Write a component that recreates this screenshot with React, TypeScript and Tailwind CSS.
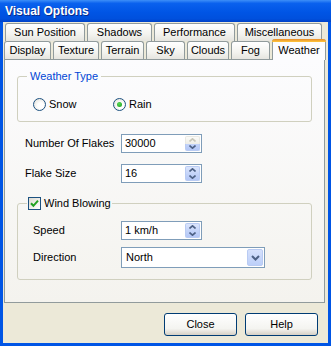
import React from 'react';

const font = { fontFamily: '"Liberation Sans", Arial, sans-serif' };

function Tab({ label, w, selected = false }: { label: string; w: number; selected?: boolean }) {
  if (selected) {
    return (
      <div
        className="relative z-10 -mt-[2px] h-[21px] shrink-0 rounded-t-[3px] border-x border-[#919b9c] bg-[#fcfcfe] text-center text-[11px] leading-[16px] text-black"
        style={{ width: w }}
      >
        <div className="h-[3px] rounded-t-[3px] bg-[linear-gradient(180deg,#e68b2c,#ffc73c)] -mx-[1px]" />
        {label}
      </div>
    );
  }
  return (
    <div
      className="h-[18px] shrink-0 rounded-t-[3px] border-x border-t border-[#919b9c] bg-[linear-gradient(180deg,#ffffff,#f3f3ef_60%,#e6e5df)] text-center text-[11px] leading-[17px] text-black"
      style={{ width: w }}
    >
      {label}
    </div>
  );
}

function Arrow({ dir, color }: { dir: 'up' | 'down'; color: string }) {
  return (
    <svg width="7" height="4" viewBox="0 0 7 4">
      {dir === 'up' ? (
        <path d="M0.5 3.5 L3.5 0.8 L6.5 3.5" fill="none" stroke={color} strokeWidth="1.6" />
      ) : (
        <path d="M0.5 0.5 L3.5 3.2 L6.5 0.5" fill="none" stroke={color} strokeWidth="1.6" />
      )}
    </svg>
  );
}

function Spin({ value, upDisabled = false }: { value: string; upDisabled?: boolean }) {
  return (
    <div className="flex h-[19px] w-[81px] items-stretch border border-[#7f9db9] bg-white">
      <div className="flex-1 pl-[3px] text-[11px] leading-[17px] text-black">{value}</div>
      <div className="my-[1px] mr-[1px] flex w-[15px] flex-col">
        <div
          className={
            upDisabled
              ? 'flex flex-1 items-center justify-center rounded-t-[2px] border border-b-0 border-[#e8e8e2] bg-[linear-gradient(180deg,#fbfbf8,#eeede6)]'
              : 'flex flex-1 items-center justify-center rounded-t-[2px] border border-b-0 border-[#b9cbf3] bg-[linear-gradient(180deg,#dbe5fc,#c3d3f9)]'
          }
        >
          <Arrow dir="up" color={upDisabled ? '#c9c7ba' : '#4d6185'} />
        </div>
        <div className="flex flex-1 items-center justify-center rounded-b-[2px] border border-t-0 border-[#b9cbf3] bg-[linear-gradient(180deg,#c3d3f9,#b4c7f6)]">
          <Arrow dir="down" color="#4d6185" />
        </div>
      </div>
    </div>
  );
}

function Combo({ value }: { value: string }) {
  return (
    <div className="flex h-[21px] w-[144px] items-stretch border border-[#7f9db9] bg-white">
      <div className="flex-1 pl-[4px] text-[11px] leading-[19px] text-black">{value}</div>
      <div className="m-[1px] flex w-[16px] items-center justify-center rounded-[2px] border border-[#b9cbf3] bg-[linear-gradient(180deg,#d6e1fc,#bccff9)]">
        <svg width="9" height="6" viewBox="0 0 9 6">
          <path d="M1 1 L4.5 4.5 L8 1" fill="none" stroke="#4d6185" strokeWidth="2" />
        </svg>
      </div>
    </div>
  );
}

function Radio({ checked = false }: { checked?: boolean }) {
  return (
    <div className="flex h-[13px] w-[13px] items-center justify-center rounded-full border border-[#1c5180] bg-[radial-gradient(circle_at_60%_60%,#ffffff_30%,#dcdad0)]">
      {checked && <div className="h-[5px] w-[5px] rounded-full bg-[radial-gradient(circle_at_40%_35%,#55d955,#1b9b1b)]" />}
    </div>
  );
}

function Button({ label }: { label: string }) {
  return (
    <div className="flex h-[23px] w-[73px] items-center justify-center rounded-[3px] border border-[#003c74] bg-[linear-gradient(180deg,#ffffff,#f4f4f0_70%,#d6d0c5)] text-[11px] text-black">
      {label}
    </div>
  );
}

export default function App() {
  return (
    <div className="flex h-[346px] w-[331px] flex-col bg-[#0055e5] select-none" style={font}>
      {/* title bar */}
      <div className="flex h-[22px] shrink-0 items-center bg-[linear-gradient(180deg,#3d8ff8_0%,#0a61ee_15%,#0055e5_55%,#0050dd_85%,#0042c8_100%)] pl-[5px]">
        <span className="text-[12px] font-bold text-white [text-shadow:1px_1px_0_#0a2a8a]">Visual Options</span>
      </div>

      {/* client area */}
      <div className="mx-[3px] mb-[3px] flex flex-1 flex-col bg-[#ece9d8]">
        <div className="pt-[1px]">
          <div className="flex gap-[2px] pl-[2px]">
            <Tab label="Sun Position" w={80} />
            <Tab label="Shadows" w={65} />
            <Tab label="Performance" w={81} />
            <Tab label="Miscellaneous" w={85} />
          </div>
          <div className="flex h-[18px] gap-[2px] pl-[1px]">
            <Tab label="Display" w={47} />
            <Tab label="Texture" w={46} />
            <Tab label="Terrain" w={43} />
            <Tab label="Sky" w={39} />
            <Tab label="Clouds" w={42} />
            <Tab label="Fog" w={39} />
            <Tab label="Weather" w={54} selected />
          </div>
        </div>

        {/* panel */}
        <div className="ml-[1px] mr-[3px] h-[244px] border border-[#919b9c] bg-[linear-gradient(180deg,#fcfcfe,#f4f3ee)] text-[11px] text-black">
          <fieldset className="mx-[12px] mt-[10px] h-[52px] rounded-[3px] border border-[#d0d0bf] px-[15px]">
            <legend className="ml-[-6px] px-[3px] leading-[13px] text-[#0046d5]">Weather Type</legend>
            <div className="mt-[13px] flex items-center">
              <div className="flex w-[80px] items-center gap-[3px]">
                <Radio />
                <span>Snow</span>
              </div>
              <div className="flex items-center gap-[3px]">
                <Radio checked />
                <span>Rain</span>
              </div>
            </div>
          </fieldset>

          <div className="mt-[12px] flex items-center pl-[20px]">
            <div className="w-[96px]">Number Of Flakes</div>
            <Spin value="30000" upDisabled />
          </div>
          <div className="mt-[11px] flex items-center pl-[20px]">
            <div className="w-[96px]">Flake Size</div>
            <Spin value="16" />
          </div>

          <fieldset className="mx-[12px] mt-[14px] h-[83px] rounded-[3px] border border-[#d0d0bf] pl-[15px]">
            <legend className="ml-[-6px] flex items-center gap-[3px] px-[1px]">
              <div className="flex h-[13px] w-[13px] items-center justify-center border border-[#1c5180] bg-[linear-gradient(135deg,#dcdad0,#ffffff)]">
                <svg width="9" height="9" viewBox="0 0 9 9">
                  <path d="M1 4.2 L3.4 6.8 L8 1.6" fill="none" stroke="#21a121" strokeWidth="2" />
                </svg>
              </div>
              <span className="leading-[13px]">Wind Blowing</span>
            </legend>
            <div className="mt-[11px] flex items-center">
              <div className="w-[88px]">Speed</div>
              <Spin value="1 km/h" />
            </div>
            <div className="mt-[7px] flex items-center">
              <div className="w-[88px]">Direction</div>
              <Combo value="North" />
            </div>
          </fieldset>
        </div>

        {/* buttons */}
        <div className="mt-[10px] flex justify-end gap-[8px] pr-[10px]">
          <Button label="Close" />
          <Button label="Help" />
        </div>
      </div>
    </div>
  );
}
